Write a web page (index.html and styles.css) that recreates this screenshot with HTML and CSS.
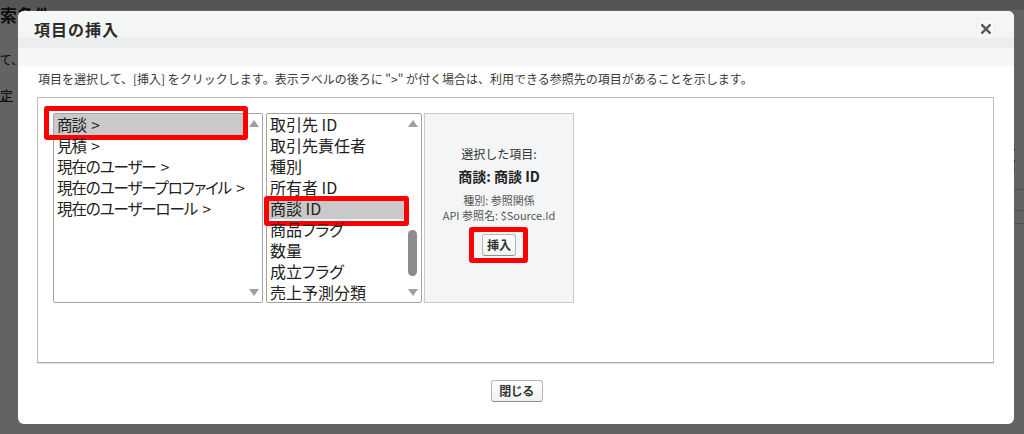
FILE: index.html
```html
<!DOCTYPE html>
<html lang="ja">
<head>
<meta charset="utf-8">
<title>項目の挿入</title>
<link rel="stylesheet" href="styles.css">
</head>
<body>
<div class="page">
  <div class="page-band"></div>
  <div class="page-main">
    <div class="page-left">
      <h1 class="page-title">索条件</h1>
      <p class="page-line">指定して、</p>
      <p class="page-link">定</p>
    </div>
    <div class="page-right">
      <p class="page-col">件数</p>
      <div class="page-row"></div>
      <div class="page-row tall"></div>
      <div class="page-row short"></div>
    </div>
  </div>
</div>

<div class="overlay">
  <div class="modal">
    <div class="modal-header">
      <h2 class="modal-title">項目の挿入</h2>
      <button class="close-x" type="button" aria-label="閉じる">
        <svg width="10" height="10" viewBox="0 0 10 10"><path d="M1.2 1.2 L8.8 8.8 M8.8 1.2 L1.2 8.8" stroke="#5a5a5a" stroke-width="2.4" stroke-linecap="square" fill="none"/></svg>
      </button>
    </div>
    <div class="modal-band"></div>
    <div class="modal-body">
      <p class="hint">項目を選択して、[挿入] をクリックします。表示ラベルの後ろに "&gt;" が付く場合は、利用できる参照先の項目があることを示します。</p>
      <div class="picker">
        <div class="listbox lb-objects">
          <ul class="items">
            <li class="item selected"><span class="mark mark-a"></span>商談 &gt;</li>
            <li class="item">見積 &gt;</li>
            <li class="item">現在のユーザー &gt;</li>
            <li class="item">現在のユーザープロファイル &gt;</li>
            <li class="item">現在のユーザーロール &gt;</li>
          </ul>
          <div class="sbar">
            <span class="arrow up"></span>
            <span class="arrow down"></span>
          </div>
        </div>
        <div class="listbox lb-fields">
          <ul class="items">
            <li class="item">取引先 ID</li>
            <li class="item">取引先責任者</li>
            <li class="item">種別</li>
            <li class="item">所有者 ID</li>
            <li class="item selected"><span class="mark mark-b"></span>商談 ID</li>
            <li class="item">商品フラグ</li>
            <li class="item">数量</li>
            <li class="item">成立フラグ</li>
            <li class="item">売上予測分類</li>
          </ul>
          <div class="sbar">
            <span class="arrow up"></span>
            <span class="thumb"></span>
            <span class="arrow down"></span>
          </div>
        </div>
        <div class="detail">
          <p class="d-label">選択した項目:</p>
          <p class="d-name">商談: 商談 ID</p>
          <p class="d-meta">種別: 参照関係</p>
          <p class="d-meta">API 参照名: $Source.Id</p>
          <div class="d-action">
            <button class="btn btn-insert" type="button"><span class="mark mark-c"></span>挿入</button>
          </div>
        </div>
      </div>
    </div>
    <div class="modal-footer">
      <button class="btn btn-close" type="button">閉じる</button>
    </div>
  </div>
</div>
</body>
</html>
```

FILE: styles.css
```css
* { box-sizing: border-box; }

html, body {
  margin: 0;
  padding: 0;
  width: 1024px;
  height: 434px;
  overflow: hidden;
}

body {
  background: #ffffff;
  font-family: "Noto Sans CJK JP", "Noto Sans", "Liberation Sans", sans-serif;
  color: #333;
  position: relative;
}

/* ---------- underlying page ---------- */
.page {
  width: 1024px;
  height: 434px;
}
.page-band {
  height: 10px;
  background: #dcdcdc;
}
.page-main {
  display: flex;
  justify-content: space-between;
}
.page-left {
  width: 200px;
}
.page-title {
  margin: -6px 0 0 0;
  font-size: 17px;
  line-height: 22px;
  font-weight: 700;
  color: #222;
}
.page-line {
  margin: 26px 0 0 -36px;
  font-size: 12px;
  line-height: 16px;
  color: #222;
}
.page-link {
  margin: 19px 0 0 0;
  font-size: 13px;
  line-height: 16px;
  color: #222;
  text-decoration: underline;
}
.page-right {
  width: 60px;
  padding-top: 130px;
}
.page-col {
  margin: 0 0 0 38px;
  font-size: 13px;
  line-height: 16px;
  color: #222;
  font-weight: 700;
}
.page-row {
  margin-top: 17px;
  border-top: 1px solid #c8c8c8;
}
.page-row.tall { margin-top: 20px; }
.page-row.short { margin-top: 12px; }

/* ---------- overlay / modal ---------- */
.overlay {
  position: absolute;
  inset: 0;
  background: rgba(0, 0, 0, 0.61);
}

.modal {
  position: absolute;
  left: 18px;
  top: 11px;
  width: 996px;
  height: 413px;
  background: #ffffff;
  border-radius: 6px;
  overflow: hidden;
  display: flex;
  flex-direction: column;
}

.modal-header {
  height: 37px;
  background: linear-gradient(to bottom, #f6f7f7 0, #f3f4f5 72%, #ebedee 73%, #ebedee 100%);
  display: flex;
  align-items: center;
  justify-content: space-between;
  padding: 0 19px 0 16px;
}
.modal-title {
  margin: -2px 0 0 0;
  font-size: 16px;
  line-height: 20px;
  font-weight: 700;
  color: #2a2a2a;
  letter-spacing: 1px;
}
.close-x {
  width: 19px;
  height: 21px;
  margin-top: -2px;
  padding: 0;
  border: 1px solid #eceeef;
  border-radius: 3px;
  background: #f6f7f8;
  display: flex;
  align-items: center;
  justify-content: center;
}

.modal-band {
  height: 18px;
  background: #f5f6f7;
}

.modal-body {
  padding: 5px 20px 0 19px;
}
.hint {
  margin: 0 0 10px 1px;
  font-size: 12px;
  line-height: 16px;
  color: #3a3a3a;
  white-space: nowrap;
}

.picker {
  height: 266px;
  border: 1px solid #bfbfbf;
  border-bottom-color: #a9a9a9;
  box-shadow: 0 1px 0 #e2e2e2;
  padding: 15px;
  display: flex;
  align-items: flex-start;
}

.listbox {
  height: 190px;
  border: 1px solid #a3a3a3;
  border-radius: 2px;
  background: #fff;
  display: flex;
}
.lb-objects { width: 210px; margin-right: 3px; }
.lb-fields { width: 156px; margin-right: 2px; }

.items {
  list-style: none;
  margin: 0;
  padding: 0;
  flex: 1;
  min-width: 0;
}
.item {
  position: relative;
  height: 21px;
  line-height: 21px;
  font-size: 16px;
  color: #222;
  padding-left: 3px;
  white-space: nowrap;
  font-feature-settings: "palt";
}
.lb-objects .item {
  font-size: 15.5px;
  letter-spacing: -1.1px;
  word-spacing: 3px;
}
.item.selected {
  background: #c9c9c9;
}

.sbar {
  width: 17px;
  flex: none;
  display: flex;
  flex-direction: column;
  align-items: center;
  padding: 6px 0 6px 0;
}
.arrow {
  width: 0;
  height: 0;
  border-left: 5px solid transparent;
  border-right: 5px solid transparent;
}
.arrow.up { border-bottom: 7px solid #a0a0a0; }
.arrow.down { border-top: 7px solid #a0a0a0; margin-top: auto; }
.thumb {
  width: 9px;
  height: 46px;
  margin-top: 103px;
  border-radius: 5px;
  background: #8c8c8c;
}

/* red annotation frames (lie over the content) */
.mark {
  position: absolute;
  border: 5px solid #ff0000;
  border-radius: 3px;
  pointer-events: none;
}
.mark-a { left: -10px; right: -3px; top: -8px; bottom: -5px; }
.mark-b { left: -3px; right: -5px; top: -2px; bottom: -7px; }
.mark-c { left: -14px; right: -13px; top: -8px; bottom: -8px; }

.detail {
  width: 150px;
  height: 190px;
  border: 1px solid #c9c9c9;
  background: #f4f5f7;
  text-align: center;
  padding-top: 32px;
}
.detail p { margin: 0; white-space: nowrap; }
.d-label {
  font-size: 12px;
  line-height: 16px;
  color: #333;
}
.d-name {
  margin-top: 5px !important;
  font-size: 14px;
  line-height: 18px;
  font-weight: 700;
  color: #222;
}
.d-meta {
  font-size: 11px;
  line-height: 15px;
  color: #555;
}
.d-name + .d-meta { margin-top: 8px; }
.d-action {
  margin-top: 11px;
  display: flex;
  justify-content: center;
}

.btn {
  position: relative;
  font-family: "Noto Sans CJK JP", "Noto Sans", sans-serif;
  color: #333;
  background: linear-gradient(to bottom, #ffffff, #f1f1f1);
  border: 1px solid #b5b5b5;
  border-bottom-color: #8f8f8f;
  border-radius: 3px;
  padding: 0;
  cursor: pointer;
}
.btn-insert {
  width: 34px;
  height: 22px;
  font-size: 12px;
  font-weight: 700;
  line-height: 20px;
}
.modal-footer {
  display: flex;
  justify-content: center;
  padding-top: 17px;
  padding-left: 1px;
}
.btn-close {
  width: 52px;
  height: 22px;
  font-size: 12px;
  line-height: 20px;
  font-weight: 700;
  letter-spacing: -0.5px;
}
```
